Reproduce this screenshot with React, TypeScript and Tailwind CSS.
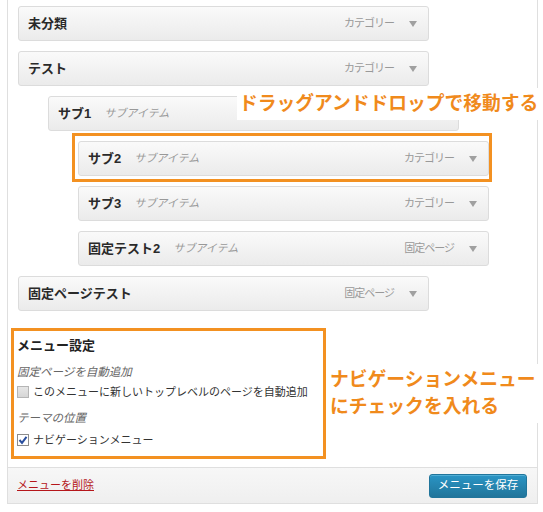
import React from "react";

const FONT = { fontFamily: "'Liberation Sans', 'Noto Sans CJK JP', sans-serif" };

function Arrow() {
  return (
    <svg width="8" height="6" viewBox="0 0 8 6" className="block">
      <path d="M0 0 L8 0 L4 6 Z" fill="#a0a0a0" />
    </svg>
  );
}

function Item({
  title,
  sub,
  type,
  indent,
  highlight,
}: {
  title: string;
  sub?: string;
  type?: string;
  indent: number;
  highlight?: boolean;
}) {
  const ml = indent === 0 ? "ml-0" : indent === 1 ? "ml-[30px]" : "ml-[60px]";
  return (
    <div className={`relative ${ml} w-[411px] h-[35px]`}>
      <div className="h-full flex items-center rounded-[3px] border border-[#dcdcdc] bg-gradient-to-b from-[#fafafa] to-[#ebebeb] pl-[9px] pr-[10px]">
        <span className="text-[13px] font-bold text-[#2a2a2a]">{title}</span>
        {sub && (
          <span className="ml-[13px] text-[11px] italic text-[#999]">{sub}</span>
        )}
        {type && (
          <>
            <span className="ml-auto text-[11px] text-[#999] tracking-[-1px]">{type}</span>
            <span className="ml-[15px] mr-[1px]">
              <Arrow />
            </span>
          </>
        )}
      </div>
      {highlight && (
        <div className="absolute left-[-6px] right-[-3px] top-[-8px] bottom-[-6px] border-[3px] border-[#f39121] pointer-events-none" />
      )}
    </div>
  );
}

function Checkbox({ checked }: { checked?: boolean }) {
  return (
    <span
      className={`inline-flex items-center justify-center w-[12px] h-[12px] border ${
        checked ? "border-[#8c8c8c] bg-white" : "border-[#b5b5b5] bg-gradient-to-b from-[#e6e6e6] to-[#d6d6d6]"
      }`}
    >
      {checked && (
        <svg width="10" height="10" viewBox="0 0 10 10">
          <path d="M1.5 5 L4 7.8 L8.5 1.8" stroke="#2a4f9e" strokeWidth="2" fill="none" />
        </svg>
      )}
    </span>
  );
}

export default function App() {
  return (
    <div className="relative w-[543px] h-[512px] bg-white overflow-hidden" style={FONT}>
      <div className="ml-[7px] w-[531px] border-x border-b border-[#dfdfdf] bg-white">
        <div className="pt-[6px] pl-[10px]">
          <div className="flex flex-col gap-[10px]">
            <Item title="未分類" type="カテゴリー" indent={0} />
            <Item title="テスト" type="カテゴリー" indent={0} />
            <Item title="サブ1" sub="サブアイテム" indent={1} />
            <Item title="サブ2" sub="サブアイテム" type="カテゴリー" indent={2} highlight />
            <Item title="サブ3" sub="サブアイテム" type="カテゴリー" indent={2} />
            <Item title="固定テスト2" sub="サブアイテム" type="固定ページ" indent={2} />
            <Item title="固定ページテスト" type="固定ページ" indent={0} />
          </div>
        </div>
        <div className="relative pt-[25px] pb-[17px] pl-[9px]">
          <div className="h-[20px] leading-[20px] text-[13px] font-bold text-[#222]">メニュー設定</div>
          <div className="mt-[6px] h-[20px] leading-[20px] text-[11.5px] italic text-[#666]">固定ページを自動追加</div>
          <div className="h-[20px] flex items-center gap-[4px] text-[11px] text-[#333]">
            <Checkbox />
            <span>このメニューに新しいトップレベルのページを自動追加</span>
          </div>
          <div className="mt-[6px] h-[20px] leading-[20px] text-[11.5px] italic text-[#666]">テーマの位置</div>
          <div className="mt-[2px] h-[20px] flex items-center gap-[4px] text-[11px] text-[#333]">
            <Checkbox checked />
            <span>ナビゲーションメニュー</span>
          </div>
          <div className="absolute left-[3px] top-[17px] w-[315px] h-[131px] border-[3px] border-[#f39121] pointer-events-none" />
        </div>
        <div className="h-[36px] border-t border-[#dfdfdf] bg-gradient-to-b from-[#f7f7f7] to-[#efefef] flex items-center pl-[9px] pr-[10px]">
          <a className="text-[11px] text-[#b5161b] underline cursor-pointer">メニューを削除</a>
          <button className="ml-auto w-[98px] h-[24px] rounded-[3px] border border-[#21759b] bg-gradient-to-b from-[#2a95c5] to-[#21759b] text-white text-[11.5px] shadow-[inset_0_1px_0_rgba(120,200,230,0.5)]">
            メニューを保存
          </button>
        </div>
      </div>

      <div className="absolute left-[237px] top-[88px] w-[306px] h-[32px] bg-white flex items-center pl-[2px] text-[18.75px] leading-none font-bold text-[#f08a1c]">
        ドラッグアンドドロップで移動する
      </div>
      <div className="absolute left-[327px] top-[364px] w-[216px] pl-[3px] pt-[2px] pb-[3px] bg-white text-[18.8px] leading-[27px] font-bold text-[#f08a1c]">
        <div>ナビゲーションメニュー</div>
        <div>にチェックを入れる</div>
      </div>
    </div>
  );
}
